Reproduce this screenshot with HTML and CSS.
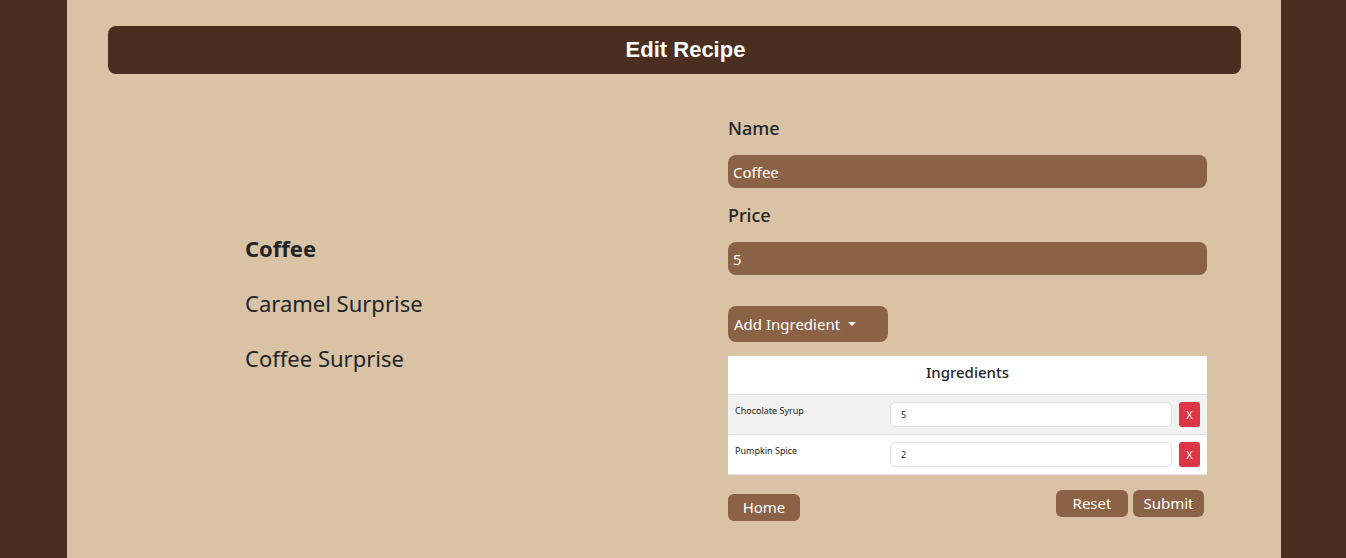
FILE: index.html
```html
<!DOCTYPE html>
<html lang="en">
<head>
<meta charset="utf-8">
<title>Edit Recipe</title>
<link rel="stylesheet" href="styles.css">
</head>
<body>
<div class="page">
  <header class="title-bar"><h1>Edit Recipe</h1></header>
  <main class="main">
    <ul class="recipes">
      <li class="active">Coffee</li>
      <li>Caramel Surprise</li>
      <li>Coffee Surprise</li>
    </ul>
    <form class="editor">
      <label class="field-label" for="name">Name</label>
      <input class="field" id="name" type="text" value="Coffee">
      <label class="field-label" for="price">Price</label>
      <input class="field" id="price" type="text" value="5">
      <button type="button" class="btn add-btn">Add Ingredient <span class="caret"></span></button>
      <table class="ingredients">
        <thead><tr><th colspan="3">Ingredients</th></tr></thead>
        <tbody>
          <tr class="alt"><td class="iname">Chocolate Syrup</td><td class="iamt"><input class="amt" type="text" value="5"></td><td class="idel"><button type="button" class="del">X</button></td></tr>
          <tr><td class="iname">Pumpkin Spice</td><td class="iamt"><input class="amt" type="text" value="2"></td><td class="idel"><button type="button" class="del">X</button></td></tr>
        </tbody>
      </table>
      <div class="actions">
        <button type="button" class="btn small home">Home</button>
        <div class="right-actions">
          <button type="button" class="btn small reset">Reset</button>
          <button type="button" class="btn small submit">Submit</button>
        </div>
      </div>
    </form>
  </main>
</div>
</body>
</html>
```
FILE: styles.css
```css
html, body {
  margin: 0;
  padding: 0;
  height: 100%;
}
body {
  background: #4a2f20;
  font-family: "Noto Sans", "Open Sans", sans-serif;
  color: #212529;
}
.page {
  width: 1214px;
  margin: 0 65px 0 67px;
  min-height: 100%;
  background: #d9c3a4;
  padding: 26px 40px 0 41px;
  box-sizing: border-box;
}
.title-bar {
  background: #4a2f20;
  border-radius: 8px;
  height: 48px;
  display: flex;
  align-items: center;
  justify-content: center;
  padding-left: 22px;
}
.title-bar h1 {
  margin: 0;
  font-family: "Liberation Sans", Arial, sans-serif;
  font-weight: bold;
  font-size: 22px;
  color: #ffffff;
}
.main {
  display: grid;
  grid-template-columns: 620px 479px;
  padding-top: 41px;
}
.recipes {
  list-style: none;
  margin: 0;
  padding: 115px 0 0 137px;
  display: flex;
  flex-direction: column;
  gap: 19px;
}
.recipes li {
  font-size: 22px;
  line-height: 36px;
  color: #212529;
}
.recipes li.active {
  font-weight: bold;
}
.editor {
  display: flex;
  flex-direction: column;
}
.field-label {
  font-size: 18px;
  font-weight: 500;
  line-height: 27px;
  margin-bottom: 13px;
}
.field {
  height: 33px;
  box-sizing: border-box;
  border: none;
  border-radius: 8px;
  background: #8b6246;
  color: #ffffff;
  font-family: inherit;
  font-size: 15px;
  padding: 0 5px;
  margin-bottom: 14px;
  outline: none;
}
.btn {
  background: #8b6246;
  color: #ffffff;
  border: none;
  font-family: inherit;
  cursor: pointer;
}
.add-btn {
  align-self: flex-start;
  margin-top: 17px;
  width: 160px;
  height: 36px;
  border-radius: 8px;
  font-size: 15px;
  text-align: left;
  padding: 0 6px;
  display: flex;
  align-items: center;
  gap: 8px;
}
.caret {
  width: 0;
  height: 0;
  border-left: 4px solid transparent;
  border-right: 4px solid transparent;
  border-top: 4px solid #ffffff;
}
.ingredients {
  margin-top: 14px;
  width: 100%;
  border-collapse: collapse;
  background: #ffffff;
}
.ingredients th {
  height: 38px;
  font-size: 15px;
  font-weight: 500;
  color: #212529;
  border-bottom: 1px solid #dee2e6;
  padding: 0 0 6px;
  box-sizing: border-box;
}
.ingredients tbody tr {
  height: 40px;
  border-bottom: 1px solid #dee2e6;
}
.ingredients tr.alt {
  background: #f2f2f2;
}
.ingredients td {
  padding: 0;
}
.iname {
  font-size: 9px;
  vertical-align: top;
  padding: 9px 0 0 7px !important;
  width: 155px;
}
.iamt {
  padding: 0 7px 0 0 !important;
}
.amt {
  width: 100%;
  height: 25px;
  box-sizing: border-box;
  border: 1px solid #dee2e6;
  border-radius: 5px;
  background: #ffffff;
  font-family: inherit;
  font-size: 9px;
  padding: 0 10px;
  color: #212529;
  display: block;
}
.idel {
  width: 28px;
}
.del {
  width: 21px;
  height: 25px;
  background: #dc3545;
  color: #ffffff;
  border: none;
  border-radius: 3px;
  font-family: inherit;
  font-size: 11px;
  padding: 0;
  display: block;
}
.actions {
  display: flex;
  justify-content: space-between;
  align-items: flex-start;
  margin-top: 15px;
}
.right-actions {
  display: flex;
  gap: 5px;
  margin-right: 3px;
}
.btn.small {
  height: 27px;
  border-radius: 6px;
  font-size: 15px;
  padding: 0;
}
.home {
  width: 72px;
  margin-top: 4px;
}
.reset {
  width: 72px;
}
.submit {
  width: 71px;
}
```
